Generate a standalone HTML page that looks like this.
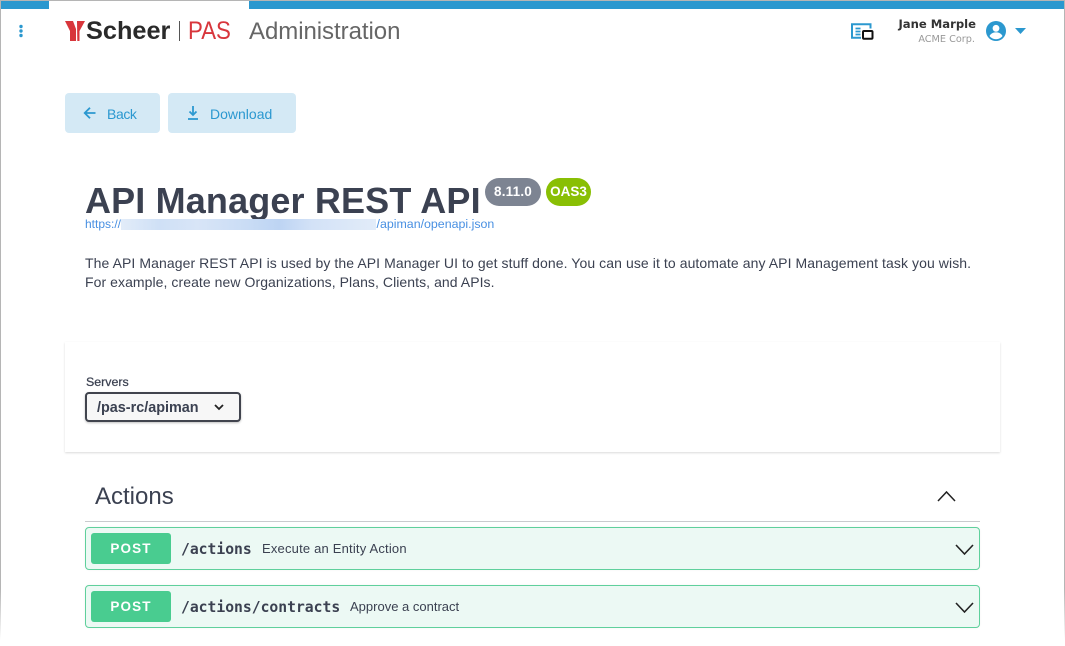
<!DOCTYPE html>
<html><head><meta charset="utf-8">
<style>
*{box-sizing:border-box}
html,body{margin:0;padding:0;background:#fff}
body{width:1065px;height:646px;position:relative;overflow:hidden;font-family:"Liberation Sans",sans-serif}
.a{position:absolute;white-space:nowrap}
.btn{position:absolute;top:93px;height:40px;background:#d4e9f5;border-radius:4px;color:#2b98d0;font-size:14px;line-height:42px}
.op{position:absolute;left:85px;width:895px;height:43px;background:#ecf9f4;border:1px solid #5fd09c;border-radius:4px;box-shadow:0 0 2px rgba(0,0,0,.05)}
.post{position:absolute;left:5px;top:5px;width:80px;height:31px;background:#49cc90;border-radius:3px;color:#fff;font-weight:bold;font-size:13.500px;line-height:32px;text-align:center;letter-spacing:1.100px}
.path{position:absolute;left:95px;top:13px;font-family:"DejaVu Sans Mono",monospace;font-weight:bold;font-size:14.700px;line-height:18px;color:#3b4151;white-space:nowrap}
.desc{position:absolute;top:12px;font-size:13px;line-height:17px;color:#3b4151;white-space:nowrap}
.op svg{position:absolute;left:869px;top:16px}
</style></head><body>
<div class="a" style="left:0;top:0;width:1065px;height:1px;background:#b5b5b5"></div>
<div class="a" style="left:1px;top:1px;width:48px;height:8px;background:#2b98cf"></div>
<div class="a" style="left:249px;top:1px;width:815px;height:8px;background:#2b98cf"></div>
<div class="a" style="left:0;top:0;width:1px;height:640px;background:linear-gradient(#b5b5b5 92%,#fff)"></div>
<div class="a" style="left:1064px;top:0;width:1px;height:640px;background:linear-gradient(#b5b5b5 92%,#fff)"></div>

<svg class="a" style="left:18px;top:24px" width="6" height="14"><g fill="#2b98cf"><circle cx="3" cy="2.500" r="1.700"/><circle cx="3" cy="7" r="1.700"/><circle cx="3" cy="11.500" r="1.700"/></g></svg>

<svg class="a" style="left:65px;top:21px" width="21" height="20"><path fill="#d8363c" d="M0 0H8L11 8V20H5V10ZM12 0H20L14.500 10V20H12.300Z"/></svg>
<div class="a" style="left:86px;top:15px;font-size:25.300px;line-height:32px;font-weight:bold;color:#2a2a2a">Scheer</div>
<div class="a" style="left:179px;top:21px;width:1px;height:20px;background:#555"></div>
<div class="a" style="left:188px;top:15px;font-size:25px;line-height:32px;color:#d8363c;transform:scaleX(.89);transform-origin:0 50%">PAS</div>
<div class="a" style="left:249px;top:16px;font-size:24px;line-height:32px;color:#666;letter-spacing:-.05px">Administration</div>

<svg class="a" style="left:851px;top:23px" width="23" height="18" fill="none">
<path d="M10 14.800H1V1.200H19.500V5.500" stroke="#2b98cf" stroke-width="2"/>
<path d="M4.500 5.500H9.500M4.500 8.500H9.500M4.500 11.500H9.500" stroke="#2b98cf" stroke-width="1.700"/>
<rect x="12" y="8" width="9.500" height="7.800" rx="1" stroke="#111" stroke-width="2"/>
</svg>
<div class="a" style="right:89px;top:16px;font-family:'DejaVu Sans',sans-serif;font-weight:bold;font-size:11.600px;line-height:16px;color:#333">Jane Marple</div>
<div class="a" style="right:90px;top:33px;font-family:'DejaVu Sans',sans-serif;font-size:9.700px;line-height:14px;color:#999">ACME Corp.</div>
<svg class="a" style="left:985px;top:20px" width="22" height="22" viewBox="0 0 22 22"><circle cx="11" cy="11" r="10" fill="#2b98cf"/><circle cx="11" cy="8.300" r="3.400" fill="#fff"/><path d="M4.500 16c1.500-2.700 4-3.600 6.500-3.600s5 .9 6.500 3.600c-1.600 2-4 3.200-6.500 3.200S6.100 18 4.500 16z" fill="#fff"/></svg>
<svg class="a" style="left:1015px;top:28px" width="11" height="6"><path d="M0 0H11L5.500 6Z" fill="#2b98cf"/></svg>

<div class="btn" style="left:65px;width:95px">
<svg style="position:absolute;left:18px;top:13px" width="14" height="14" fill="none" stroke="#2b98d0" stroke-width="1.800"><path d="M12.500 7H2M7 1.700 1.700 7 7 12.300"/></svg>
<span style="position:absolute;left:42px;letter-spacing:-.4px">Back</span></div>
<div class="btn" style="left:168px;width:128px">
<svg style="position:absolute;left:18px;top:12px" width="14" height="16" fill="none" stroke="#2b98d0" stroke-width="1.800"><path d="M7 1V8.500"/><path d="M3.500 6.500 7 10 10.500 6.500"/><path d="M2 14H12"/></svg>
<span style="position:absolute;left:42px">Download</span></div>

<div class="a" style="left:85px;top:181px;font-size:36px;line-height:40px;font-weight:bold;color:#3b4151;letter-spacing:.15px">API Manager REST API</div>
<div class="a" style="left:485px;top:178px;width:56px;height:28px;border-radius:14px;background:#7d8492;color:#fff;font-weight:bold;font-size:13.500px;line-height:27px;text-align:center;letter-spacing:.2px">8.11.0</div>
<div class="a" style="left:546px;top:178px;width:45px;height:28px;border-radius:14px;background:#89bf04;color:#fff;font-weight:bold;font-size:13.500px;line-height:27px;text-align:center">OAS3</div>
<div class="a" style="left:85px;top:217px;font-size:12px;line-height:14px;color:#4990e2">https://</div>
<div class="a" style="left:121px;top:219px;width:255px;height:11px;background:linear-gradient(90deg,#e2ecf9,#cfe0f6 15%,#d8e5f7 30%,#c9dcf5 50%,#bdd4f3 62%,#d3e2f7 75%,#e2ecf9)"></div>
<div class="a" style="left:376.500px;top:217px;font-size:12.400px;line-height:14px;color:#4990e2">/apiman/openapi.json</div>
<div class="a" style="left:85px;top:253px;font-size:14px;line-height:20px;color:#3b4151;letter-spacing:.083px">The API Manager REST API is used by the API Manager UI to get stuff done. You can use it to automate any API Management task you wish.</div>
<div class="a" style="left:85px;top:272px;font-size:14px;line-height:20px;color:#3b4151;letter-spacing:.065px">For example, create new Organizations, Plans, Clients, and APIs.</div>

<div class="a" style="left:65px;top:342px;width:935px;height:110px;background:#fff;box-shadow:0 1px 2px rgba(0,0,0,.15)"></div>
<div class="a" style="left:86px;top:375px;font-size:12.400px;line-height:15px;color:#3b4151;-webkit-text-stroke:.25px #3b4151">Servers</div>
<div class="a" style="left:85px;top:392px;width:156px;height:30px;background:#f7f7f7;border:2px solid #41444e;border-radius:4px;box-shadow:0 1px 2px 0 rgba(0,0,0,.25)">
<span style="position:absolute;left:10px;top:6px;font-size:14.400px;line-height:17px;font-weight:bold;color:#3b4151">/pas-rc/apiman</span>
<svg style="position:absolute;left:127px;top:10px" width="10" height="7" fill="none" stroke="#222" stroke-width="1.800"><path d="M1 1 5 5 9 1"/></svg>
</div>

<div class="a" style="left:95px;top:483px;font-size:24px;line-height:28px;color:#3b4151">Actions</div>
<svg class="a" style="left:937px;top:490px" width="19" height="12" fill="none" stroke="#222" stroke-width="1.500"><path d="M1 11 9.500 2 18 11"/></svg>
<div class="a" style="left:85px;top:521px;width:895px;height:1px;background:#c9cbce"></div>

<div class="op" style="top:527px">
<div class="post">POST</div>
<div class="path">/actions</div>
<div class="desc" style="left:176px;letter-spacing:.19px">Execute an Entity Action</div>
<svg width="20" height="12" fill="none" stroke="#222" stroke-width="1.600"><path d="M1 1 9.500 10 18 1"/></svg>
</div>
<div class="op" style="top:585px">
<div class="post">POST</div>
<div class="path">/actions/contracts</div>
<div class="desc" style="left:264px">Approve a contract</div>
<svg width="20" height="12" fill="none" stroke="#222" stroke-width="1.600"><path d="M1 1 9.500 10 18 1"/></svg>
</div>
</body></html>
